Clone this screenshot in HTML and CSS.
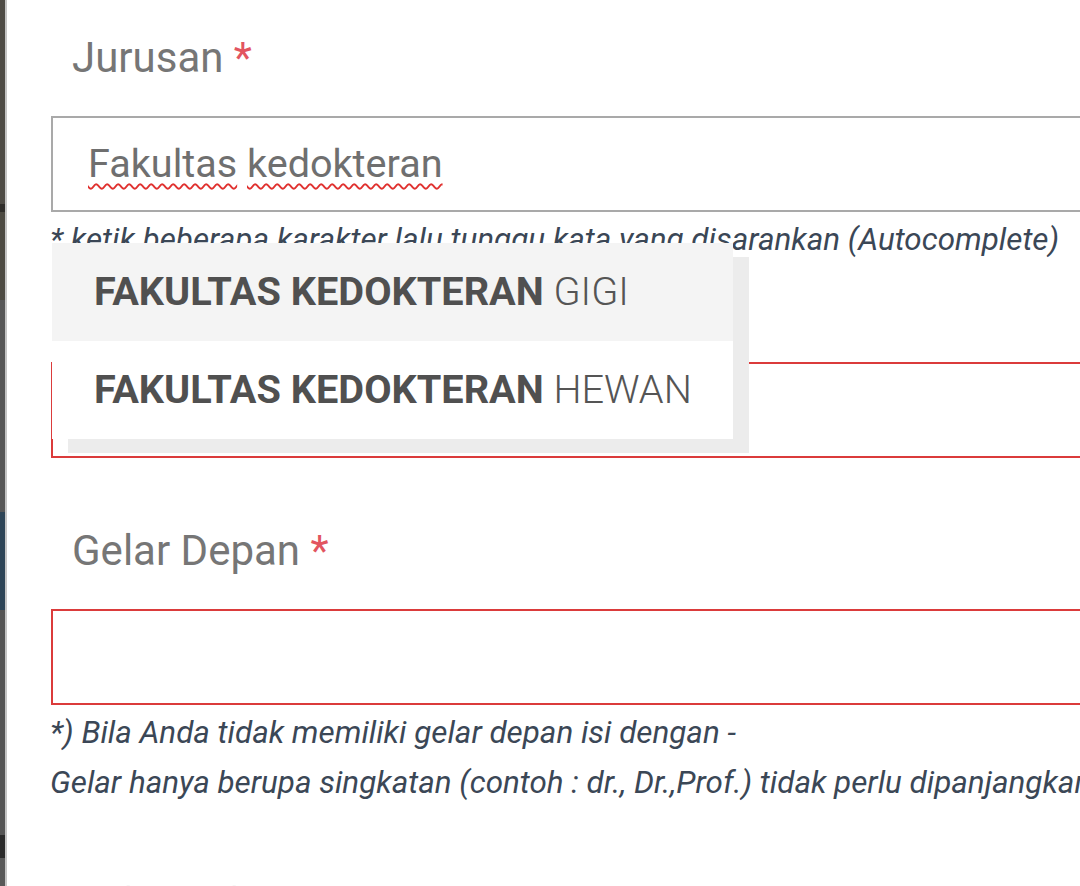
FILE: index.html
```html
<!DOCTYPE html>
<html lang="id">
<head>
<meta charset="utf-8">
<title>Form</title>
<link rel="stylesheet" href="styles.css">
</head>
<body>
<div class="screen">
  <div class="backdrop"></div>
  <div class="modal">
    <div class="group group-first">
      <label class="label">Jurusan <span class="req">*</span></label>
      <div class="field">
        <div class="input input-neutral"><span class="typo">Fakultas</span> <span class="typo">kedokteran</span></div>
        <ul class="suggest">
          <li class="item active"><b>FAKULTAS KEDOKTERAN</b> GIGI</li>
          <li class="item"><b>FAKULTAS KEDOKTERAN</b> HEWAN</li>
        </ul>
      </div>
      <p class="help">* ketik beberapa karakter lalu tunggu kata yang disarankan (Autocomplete)</p>
    </div>
    <div class="group">
      <label class="label">Program Studi <span class="req">*</span></label>
      <div class="input input-error"></div>
    </div>
    <div class="group group-notes">
      <label class="label">Gelar Depan <span class="req">*</span></label>
      <div class="input input-error"></div>
      <p class="help">*) Bila Anda tidak memiliki gelar depan isi dengan -</p>
      <p class="help">Gelar hanya berupa singkatan (contoh : dr., Dr.,Prof.) tidak perlu dipanjangkan</p>
    </div>
    <div class="group">
      <label class="label">Gelar Belakang <span class="req">*</span></label>
      <div class="input input-error"></div>
    </div>
  </div>
</div>
</body>
</html>
```

FILE: styles.css
```css
* { box-sizing: border-box; }

html, body {
  margin: 0;
  padding: 0;
  background: #ffffff;
}

body {
  width: 1080px;
  height: 886px;
  overflow: hidden;
  font-family: Roboto, "Noto Sans", "Liberation Sans", sans-serif;
}

.screen {
  display: flex;
  width: 1080px;
  height: 886px;
  overflow: hidden;
}

.backdrop {
  flex: 0 0 7px;
  border-right: 2px solid #c4c4c4;
  background: linear-gradient(to bottom,
    #4e4b45 0px, #4e4b45 204px,
    #2f2d2a 204px, #2f2d2a 212px,
    #4d4a42 212px, #4d4a42 300px,
    #565656 300px, #565656 512px,
    #2d4456 512px, #2d4456 610px,
    #555555 610px, #555555 835px,
    #2a2a2a 835px, #2a2a2a 858px,
    #585858 858px);
}

.modal {
  flex: 0 0 1200px;
  padding: 33px 0 0 44px;
  background: #ffffff;
}

.group {
  margin-bottom: 68px;
}

.group-first {
  margin-bottom: 14px;
}

.group-notes {
  margin-bottom: 71px;
}

.label {
  display: block;
  padding-left: 21px;
  margin-bottom: 33px;
  font-size: 42px;
  line-height: 50px;
  color: #767676;
  font-weight: 400;
}

.req {
  color: #e25560;
}

.field {
  position: relative;
}

.input {
  width: 1120px;
  height: 96px;
  padding: 0 35px;
  font-size: 39.6px;
  line-height: 92px;
  color: #6f6f6f;
  background: #ffffff;
}

.input-neutral {
  border: 2px solid #a9a9a9;
}

.input-error {
  border: 2px solid #db3b3b;
}

.typo {
  text-decoration: underline wavy #e0312f;
  text-decoration-thickness: 2px;
  text-underline-offset: 6px;
}

.help {
  margin: 3px 0 0 -1px;
  font-size: 31.4px;
  line-height: 50px;
  font-style: italic;
  color: #3b4756;
  white-space: nowrap;
}

.help + .help {
  margin-top: 0;
}

.suggest {
  position: absolute;
  left: 1px;
  top: calc(100% + 31px);
  width: 681px;
  margin: 0;
  padding: 0;
  list-style: none;
  background: #ffffff;
  box-shadow: 16px 14px 0 #ececec;
  z-index: 5;
}

.item {
  height: 98px;
  padding-left: 42px;
  font-size: 39.7px;
  line-height: 98px;
  color: #555555;
  font-weight: 300;
  white-space: nowrap;
}

.item b {
  font-weight: 700;
  color: #505050;
}

.item.active {
  background: #f4f4f4;
}
```
